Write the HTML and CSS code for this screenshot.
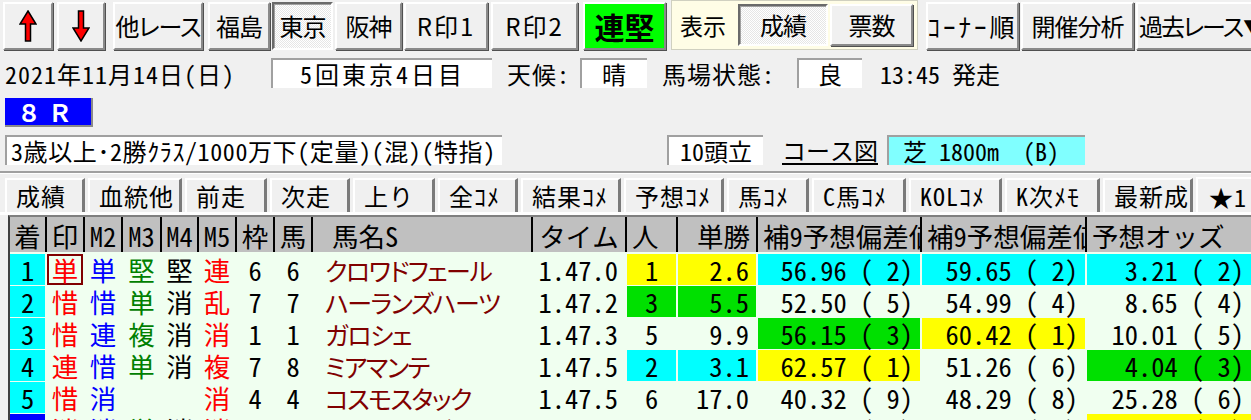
FILE: index.html
```html
<!DOCTYPE html>
<html lang="ja">
  <head>
    <meta charset="UTF-8" />
    <title>レース成績</title>
    <link rel="stylesheet" href="styles.css">
  </head>
  <body>
    <div class="toolbar">
      <button class="btn b-up">
        <svg width="18" height="32" viewBox="0 0 18 32"><polygon points="9,1 17,14 11.5,14 11.5,31 6.5,31 6.5,14 1,14" fill="#ff0000" stroke="#000" stroke-width="1.5" stroke-linejoin="miter"/></svg>
      </button>
      <button class="btn b-down">
        <svg width="18" height="32" viewBox="0 0 18 32"><polygon points="6.5,1 11.5,1 11.5,18 17,18 9,31 1,18 6.5,18" fill="#ff0000" stroke="#000" stroke-width="1.5" stroke-linejoin="miter"/></svg>
      </button>
      <button class="btn b-other">他レース</button>
      <button class="btn b-fuku">福島</button>
      <button class="btn b-tokyo pressed">東京</button>
      <button class="btn b-hanshin">阪神</button>
      <button class="btn b-mark1">R印1</button>
      <button class="btn b-mark2">R印2</button>
      <button class="btn b-renken">連堅</button>
      <div class="mode">
        <span class="mode-label">表示</span>
        <button class="btn mode-result pressed">成績</button>
        <button class="btn mode-votes">票数</button>
      </div>
      <button class="btn b-corner">ｺｰﾅｰ順</button>
      <button class="btn b-analysis">開催分析</button>
      <button class="btn b-past">過去レース<span class="caret">▼</span></button>
    </div>

    <div class="info">
      <span class="date">2021年11月14日(日)</span>
      <span class="field kai">5回東京4日目</span>
      <span class="lbl lbl-weather">天候:</span>
      <span class="field weather">晴</span>
      <span class="lbl lbl-going">馬場状態:</span>
      <span class="field going">良</span>
      <span class="post">13:45 発走</span>
    </div>

    <div class="race-no">８Ｒ</div>

    <div class="cond">
      <span class="field cls">3歳以上･2勝ｸﾗｽ/1000万下(定量)(混)(特指)</span>
      <span class="field heads">10頭立</span>
      <a class="course">コース図</a>
      <span class="field track">芝 1800m  (B)</span>
    </div>

    <div class="rule"></div>

    <div class="tabs">
      <div class="tab w80">成績</div>
      <div class="tab w94">血統他</div>
      <div class="tab w82">前走</div>
      <div class="tab w80">次走</div>
      <div class="tab w82">上り</div>
      <div class="tab w80">全ｺﾒ</div>
      <div class="tab w100">結果ｺﾒ</div>
      <div class="tab w100">予想ｺﾒ</div>
      <div class="tab w82">馬ｺﾒ</div>
      <div class="tab w94">C馬ｺﾒ</div>
      <div class="tab w93">KOLｺﾒ</div>
      <div class="tab w95">K次ﾒﾓ</div>
      <div class="tab w90">最新成</div>
      <div class="tab active">★1</div>
    </div>

    <div class="sheet">
      <div class="thead">
        <div class="th">着</div>
        <div class="th">印</div>
        <div class="th">M2</div>
        <div class="th">M3</div>
        <div class="th">M4</div>
        <div class="th">M5</div>
        <div class="th">枠</div>
        <div class="th">馬</div>
        <div class="th left name-h">馬名S</div>
        <div class="th">タイム</div>
        <div class="th left">人</div>
        <div class="th right">単勝</div>
        <div class="th left clip">補9予想偏差値</div>
        <div class="th left clip">補9予想偏差値</div>
        <div class="th left">予想オッズ</div>
      </div>

      <div class="row">
        <div class="td bg-cyan">1</div>
        <div class="td c-red boxed">単</div>
        <div class="td c-blue">単</div>
        <div class="td c-green">堅</div>
        <div class="td">堅</div>
        <div class="td c-red">連</div>
        <div class="td">6</div>
        <div class="td">6</div>
        <div class="td name">クロワドフェール</div>
        <div class="td num">1.47.0</div>
        <div class="td bg-yellow">1</div>
        <div class="td num bg-yellow">2.6</div>
        <div class="td num bg-cyan">56.96 ( 2)</div>
        <div class="td num bg-cyan">59.65 ( 2)</div>
        <div class="td num bg-cyan"> 3.21 ( 2)</div>
      </div>

      <div class="row">
        <div class="td bg-cyan">2</div>
        <div class="td c-red">惜</div>
        <div class="td c-blue">惜</div>
        <div class="td c-green">単</div>
        <div class="td">消</div>
        <div class="td c-red">乱</div>
        <div class="td">7</div>
        <div class="td">7</div>
        <div class="td name">ハーランズハーツ</div>
        <div class="td num">1.47.2</div>
        <div class="td bg-green">3</div>
        <div class="td num bg-green">5.5</div>
        <div class="td num">52.50 ( 5)</div>
        <div class="td num">54.99 ( 4)</div>
        <div class="td num"> 8.65 ( 4)</div>
      </div>

      <div class="row">
        <div class="td bg-cyan">3</div>
        <div class="td c-red">惜</div>
        <div class="td c-blue">連</div>
        <div class="td c-green">複</div>
        <div class="td">消</div>
        <div class="td c-red">消</div>
        <div class="td">1</div>
        <div class="td">1</div>
        <div class="td name">ガロシェ</div>
        <div class="td num">1.47.3</div>
        <div class="td">5</div>
        <div class="td num">9.9</div>
        <div class="td num bg-green">56.15 ( 3)</div>
        <div class="td num bg-yellow">60.42 ( 1)</div>
        <div class="td num">10.01 ( 5)</div>
      </div>

      <div class="row">
        <div class="td bg-cyan">4</div>
        <div class="td c-red">連</div>
        <div class="td c-blue">惜</div>
        <div class="td c-green">単</div>
        <div class="td">消</div>
        <div class="td c-red">複</div>
        <div class="td">7</div>
        <div class="td">8</div>
        <div class="td name">ミアマンテ</div>
        <div class="td num">1.47.5</div>
        <div class="td bg-cyan">2</div>
        <div class="td num bg-cyan">3.1</div>
        <div class="td num bg-yellow">62.57 ( 1)</div>
        <div class="td num">51.26 ( 6)</div>
        <div class="td num bg-green"> 4.04 ( 3)</div>
      </div>

      <div class="row">
        <div class="td bg-cyan">5</div>
        <div class="td c-red">惜</div>
        <div class="td c-blue">消</div>
        <div class="td c-green"></div>
        <div class="td"></div>
        <div class="td c-red">消</div>
        <div class="td">4</div>
        <div class="td">4</div>
        <div class="td name">コスモスタック</div>
        <div class="td num">1.47.5</div>
        <div class="td">6</div>
        <div class="td num">17.0</div>
        <div class="td num">40.32 ( 9)</div>
        <div class="td num">48.29 ( 8)</div>
        <div class="td num">25.28 ( 6)</div>
      </div>

      <div class="row">
        <div class="td bg-blue">6</div>
        <div class="td c-red">消</div>
        <div class="td c-blue">消</div>
        <div class="td c-green">単</div>
        <div class="td">消</div>
        <div class="td c-red">消</div>
        <div class="td">5</div>
        <div class="td">5</div>
        <div class="td name">エアファンディタ</div>
        <div class="td num">1.47.6</div>
        <div class="td">8</div>
        <div class="td num">22.3</div>
        <div class="td num">50.10 ( 7)</div>
        <div class="td num">49.80 ( 7)</div>
        <div class="td num bg-yellow"> 2.95 ( 1)</div>
      </div>
    </div>
  </body>
</html>
```

FILE: styles.css
```css
body {
  margin: 0;
  width: 1251px;
  height: 420px;
  overflow: hidden;
  background-color: #f0f0f0;
  color: #000;
  font-family: "Noto Sans Mono CJK JP", "Noto Sans CJK JP", sans-serif;
}

/* toolbar */
.toolbar {
  display: flex;
  align-items: flex-start;
  height: 52px;
  padding: 2px 0 0 3px;
  box-sizing: border-box;
  white-space: nowrap;
  overflow: hidden;
}
.btn {
  flex: none;
  height: 48px;
  box-sizing: border-box;
  padding: 0;
  margin: 0 0 0 2px;
  display: flex;
  align-items: center;
  justify-content: center;
  background: #f0f0f0;
  border: 2px solid;
  border-color: #fff #8a8a8a #8a8a8a #fff;
  box-shadow: 1px 1px 0 #505050;
  font-family: "Noto Sans CJK JP", sans-serif;
  font-feature-settings: "palt" 1;
  font-size: 24px;
  letter-spacing: -1px;
  line-height: 1;
  color: #000;
}
.btn.pressed {
  border-color: #6a6a6a #fff #fff #6a6a6a;
  box-shadow: inset 1px 1px 0 #a0a0a0;
  background: repeating-conic-gradient(#fff 0 25%, #e6e6e6 0 50%) 0 0 / 2px 2px;
}
.b-up { width: 50px; margin-left: 0; }
.b-down { width: 48px; margin-left: 4px; }
.b-other { width: 90px; margin-left: 8px; }
.b-fuku { width: 62px; margin-left: 5px; }
.b-tokyo { width: 61px; }
.b-hanshin { width: 67px; }
.b-mark1 { width: 84px; letter-spacing: 2px; }
.b-mark2 { width: 87px; margin-left: 3px; letter-spacing: 2px; }
.b-renken {
  width: 83px;
  margin-left: 5px;
  background: #00ff00;
  font-size: 30px;
  font-weight: bold;
  letter-spacing: 0;
}
.mode {
  flex: none;
  display: flex;
  align-items: center;
  width: 247px;
  height: 50px;
  margin: -2px 0 0 5px;
  box-sizing: border-box;
  background: #fffde6;
  border: 1px solid #d0d0c0;
}
.mode-label {
  width: 66px;
  padding-left: 8px;
  box-sizing: border-box;
  font-family: "Noto Sans CJK JP", sans-serif;
  font-size: 23px;
}
.mode .btn { height: 42px; margin: 0; }
.mode-result { width: 90px; }
.mode-votes { width: 83px; margin-left: 2px !important; }
.b-corner { width: 93px; margin-left: 8px; letter-spacing: 3px; font-size: 25px; }
.b-analysis { width: 113px; }
.b-past {
  width: 130px;
  justify-content: flex-start;
  padding-left: 1px;
  letter-spacing: -2px;
}
.caret {
  font-size: 18px;
  letter-spacing: 0;
  margin-left: 1px;
}

/* race info */
.info {
  display: flex;
  align-items: center;
  height: 34px;
  margin-top: 4px;
  padding-left: 5px;
  font-size: 24px;
  letter-spacing: 1px;
  white-space: nowrap;
}
.field {
  display: flex;
  align-items: center;
  justify-content: center;
  height: 30px;
  box-sizing: border-box;
  background: #fff;
  border-top: 2px solid #a0a0a0;
  border-left: 2px solid #a0a0a0;
  line-height: 1;
  white-space: pre;
}
.date { width: 266px; }
.kai { width: 221px; letter-spacing: 3px; }
.lbl-weather { width: 73px; margin-left: 15px; }
.weather { width: 67px; }
.lbl-going { width: 135px; margin-left: 15px; }
.going { width: 65px; }
.post { margin-left: 18px; letter-spacing: 0; }

.race-no {
  width: 88px;
  height: 29px;
  margin: 8px 0 0 5px;
  padding-left: 12px;
  box-sizing: border-box;
  background: #0000ff;
  border-right: 2px solid #8a8a8a;
  border-bottom: 2px solid #8a8a8a;
  color: #fff;
  font-family: "Noto Sans CJK JP", sans-serif;
  font-weight: bold;
  font-size: 24px;
  line-height: 27px;
  letter-spacing: 7px;
}

.cond {
  display: flex;
  align-items: center;
  height: 30px;
  margin-top: 8px;
  padding-left: 5px;
  font-size: 24px;
  white-space: nowrap;
}
.cls {
  width: 497px;
  justify-content: flex-start;
  padding-left: 4px;
  letter-spacing: 0.6px;
}
.heads { width: 96px; margin-left: 165px; }
.course {
  margin-left: 19px;
  text-decoration: underline;
  text-underline-offset: 3px;
  text-decoration-thickness: 2px;
  line-height: 1;
}
.track {
  width: 198px;
  margin-left: 9px;
  background: #80ffff;
  justify-content: flex-start;
  padding-left: 14px;
}

.rule {
  margin-top: 6px;
  border-top: 2px solid #a0a0a0;
  border-bottom: 1px solid #fff;
}

/* tabs */
.tabs {
  display: flex;
  align-items: flex-end;
  height: 38px;
  padding-left: 5px;
  border-bottom: 3px solid #fff;
  white-space: nowrap;
}
.tab {
  flex: none;
  height: 34px;
  margin-right: 3px;
  padding-left: 9px;
  box-sizing: border-box;
  border-top: 2px solid #fff;
  border-left: 2px solid #fff;
  border-right: 3px solid #7a7a7a;
  font-size: 24px;
  letter-spacing: 1px;
  line-height: 31px;
}
.tab.active {
  height: 38px;
  width: 60px;
  margin-bottom: -3px;
  padding-left: 11px;
  border-right: none;
  line-height: 35px;
}
.w80 { width: 80px; }
.w82 { width: 82px; }
.w90 { width: 90px; }
.w93 { width: 93px; }
.w94 { width: 94px; }
.w95 { width: 95px; }
.w100 { width: 100px; }

/* result sheet */
.sheet {
  margin-left: 8px;
  border-top: 2px solid #808080;
  border-left: 2px solid #404040;
  background: #f0fff0;
  font-size: 26.5px;
}
.thead,
.row {
  display: grid;
  grid-template-columns: 35px 36px 36px 37px 35px 36px 36px 36px 218px 92px 49px 78px 162px 163px 164px;
  column-gap: 2px;
}
.thead {
  height: 35px;
  margin-bottom: 2px;
  background: #000;
}
.th {
  background: #c0c0c0;
  text-align: center;
  line-height: 32px;
  padding-top: 3px;
  white-space: nowrap;
}
.th.clip { overflow: hidden; }
.th.left { text-align: left; padding-left: 5px; }
.th.right { text-align: right; padding-right: 6px; }
.th.name-h { padding-left: 19px; }

.row {
  height: 30px;
  margin-bottom: 2px;
}
.td {
  text-align: center;
  line-height: 30px;
  padding-top: 1px;
  box-sizing: border-box;
  white-space: pre;
}
.td.name {
  text-align: left;
  padding-left: 12px;
  color: #800000;
  font-family: "Noto Sans CJK JP", sans-serif;
  font-feature-settings: "palt" 1;
  font-size: 25px;
  letter-spacing: -1.5px;
}
.td.num { text-align: right; padding-right: 7px; }
.boxed { border: 2px solid #800000; line-height: 26px; }

.c-red { color: #ff0000; }
.c-blue { color: #0000ff; }
.c-green { color: #008000; }
.bg-cyan { background: #00ffff; }
.bg-yellow { background: #ffff00; }
.bg-green { background: #00e000; }
.bg-blue { background: #0000ff; color: #fff; }
```
